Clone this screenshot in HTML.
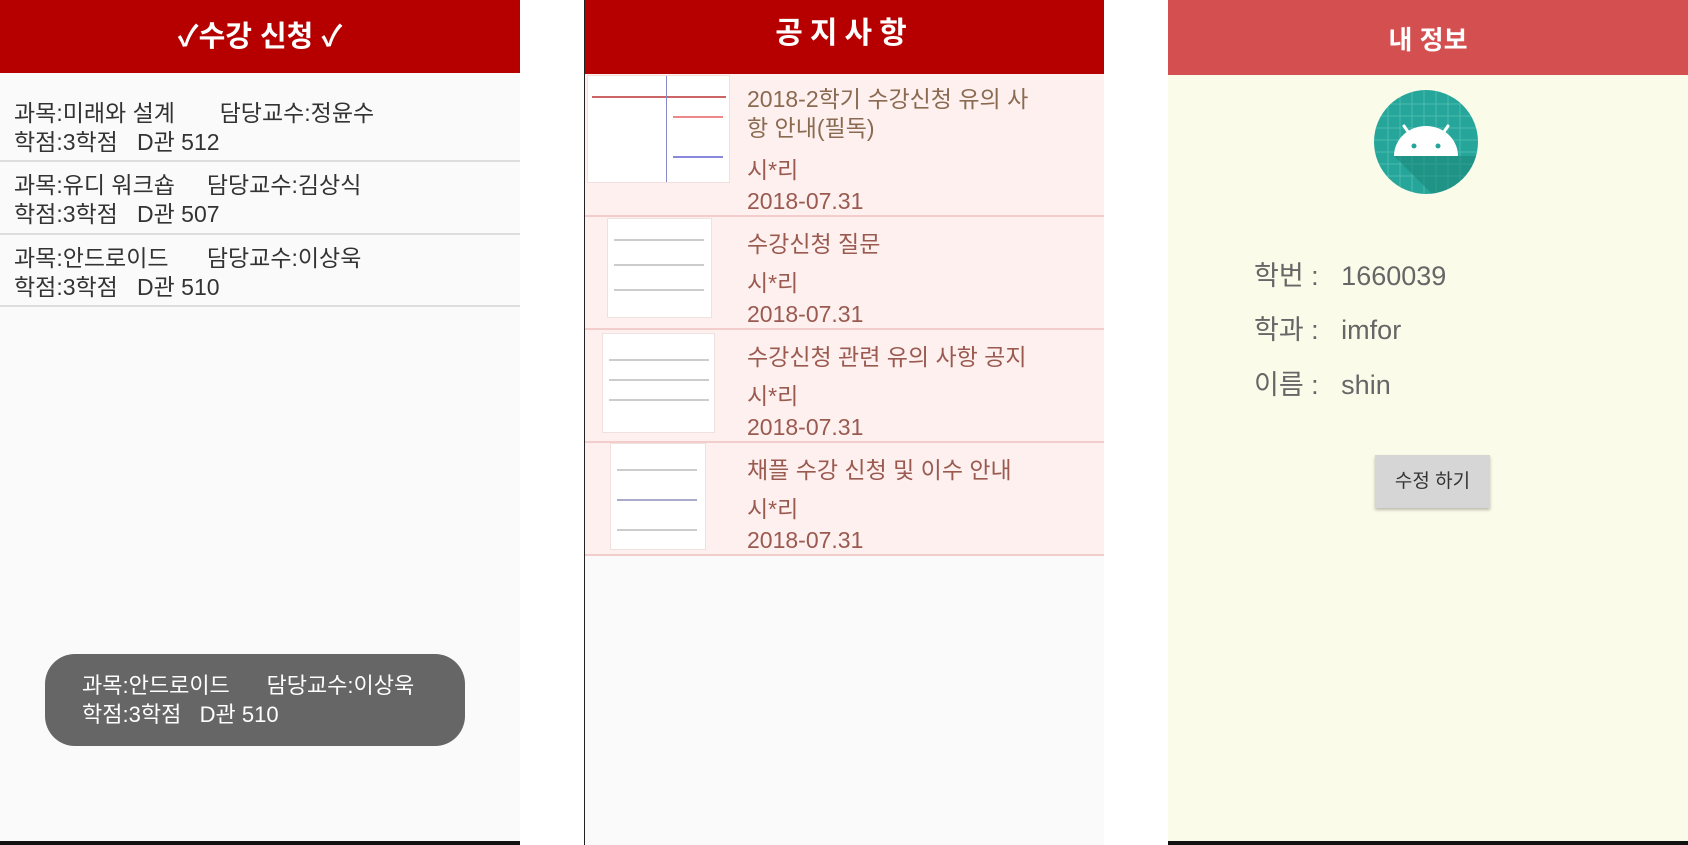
<!DOCTYPE html>
<html><head><meta charset="utf-8"><style>
*{margin:0;padding:0;box-sizing:border-box}
body{width:1688px;height:845px;background:#fff;position:relative;overflow:hidden;font-family:"Liberation Sans","Noto Sans CJK KR",sans-serif}
.p{position:absolute;top:0;height:845px}
.hd{position:absolute;left:0;top:0;width:100%;color:#fff;font-weight:bold;text-align:center}
.t{position:absolute;white-space:pre;font-size:23px;line-height:29px;color:#333}
.sep{position:absolute;left:0;width:100%;height:2px;background:#ddd}
.n{position:absolute;left:162px;font-size:23px;color:#9a5a50;white-space:pre}
.sep2{position:absolute;left:0;width:100%;height:2px;background:#f3cccc}
.th{position:absolute;background:#fff;border:1px solid #f0e0e0}
.th i{position:absolute;height:2px;background:#ccc;display:block}
.lb{position:absolute;font-size:27px;color:#666;white-space:pre}
</style></head><body>
<div class="p" style="left:0;width:520px;background:#fafafa">
 <div class="hd" style="height:73px;background:#b60000;font-size:29px;line-height:75px">✓수강 신청 ✓</div>
 <div class="t" style="left:14px;top:99px">과목:미래와 설계       담당교수:정윤수
학점:3학점   D관 512</div>
 <div class="sep" style="top:160px"></div>
 <div class="t" style="left:14px;top:171px">과목:유디 워크숍     담당교수:김상식
학점:3학점   D관 507</div>
 <div class="sep" style="top:233px"></div>
 <div class="t" style="left:14px;top:244px">과목:안드로이드      담당교수:이상욱
학점:3학점   D관 510</div>
 <div class="sep" style="top:305px"></div>
 <div style="position:absolute;left:45px;top:654px;width:420px;height:92px;border-radius:30px;background:#666"></div>
 <div class="t" style="left:82px;top:671px;color:#fff;font-size:22px;line-height:29px">과목:안드로이드      담당교수:이상욱
학점:3학점   D관 510</div>
 <div style="position:absolute;left:0;top:841px;width:100%;height:4px;background:#111"></div>
</div>
<div class="p" style="left:584px;width:520px;background:#fafafa;border-left:1px solid #222">
 <div class="hd" style="height:74px;background:#b60000;font-size:30px;line-height:68px;letter-spacing:7px">공지사항</div>
 <div style="position:absolute;left:0;top:74px;width:100%;height:481px;background:#fdf0ef"></div>
 <div class="th" style="left:2px;top:75px;width:143px;height:108px"><i style="left:4px;top:20px;width:134px;background:#c66"></i><i style="left:78px;top:0;width:1px;height:106px;background:#88c"></i><i style="left:85px;top:40px;width:50px;background:#e88"></i><i style="left:85px;top:80px;width:50px;background:#88d"></i></div>
 <div class="th" style="left:22px;top:218px;width:105px;height:100px"><i style="left:6px;top:20px;width:90px"></i><i style="left:6px;top:45px;width:90px"></i><i style="left:6px;top:70px;width:90px"></i></div>
 <div class="th" style="left:17px;top:333px;width:113px;height:100px"><i style="left:6px;top:25px;width:100px"></i><i style="left:6px;top:45px;width:100px"></i><i style="left:6px;top:65px;width:100px"></i></div>
 <div class="th" style="left:25px;top:443px;width:96px;height:107px"><i style="left:6px;top:25px;width:80px"></i><i style="left:6px;top:55px;width:80px;background:#aac"></i><i style="left:6px;top:85px;width:80px"></i></div>
 <div class="n" style="top:85px;line-height:29px;color:#8a6a50">2018-2학기 수강신청 유의 사
항 안내(필독)</div>
 <div class="n" style="top:151px">시*리</div><div class="n" style="top:188px">2018-07.31</div>
 <div class="sep2" style="top:215px"></div>
 <div class="n" style="top:225px">수강신청 질문</div><div class="n" style="top:264px">시*리</div><div class="n" style="top:301px">2018-07.31</div>
 <div class="sep2" style="top:328px"></div>
 <div class="n" style="top:338px">수강신청 관련 유의 사항 공지</div><div class="n" style="top:377px">시*리</div><div class="n" style="top:414px">2018-07.31</div>
 <div class="sep2" style="top:441px"></div>
 <div class="n" style="top:451px">채플 수강 신청 및 이수 안내</div><div class="n" style="top:490px">시*리</div><div class="n" style="top:527px">2018-07.31</div>
 <div class="sep2" style="top:554px"></div>
</div>
<div class="p" style="left:1168px;width:520px;background:#fafbe9">
 <div class="hd" style="height:75px;background:#d45050;font-size:26px;line-height:80px">내 정보</div>
 <svg style="position:absolute;left:206px;top:90px" width="104" height="104" viewBox="0 0 104 104">
  <defs><clipPath id="c"><circle cx="52" cy="52" r="52"/></clipPath></defs>
  <circle cx="52" cy="52" r="52" fill="#26a69a"/>
  <g clip-path="url(#c)" stroke="#5cc3b8" stroke-width="1" opacity=".7">
   <path d="M14 0V104M26 0V104M38 0V104M50 0V104M62 0V104M74 0V104M86 0V104M0 14H104M0 26H104M0 38H104M0 50H104M0 62H104M0 74H104M0 86H104"/>
  </g>
  <path clip-path="url(#c)" d="M20 66L60 106L104 106L104 66Z" fill="#1a7f74" opacity=".5"/>
  <path d="M20 66A32 30 0 0 1 84 66Z" fill="#fff"/>
  <path d="M30 36L37 46M74 36L67 46" stroke="#fff" stroke-width="3" stroke-linecap="round"/>
  <circle cx="40" cy="56" r="2.5" fill="#26a69a"/><circle cx="64" cy="56" r="2.5" fill="#26a69a"/>
 </svg>
 <div class="lb" style="left:86px;top:254px">학번 :   1660039</div>
 <div class="lb" style="left:86px;top:308px">학과 :   imfor</div>
 <div class="lb" style="left:86px;top:363px">이름 :   shin</div>
 <div style="position:absolute;left:207px;top:455px;width:115px;height:53px;background:#d6d6d6;box-shadow:0 2px 3px rgba(0,0,0,.25);font-size:19px;color:#333;text-align:center;line-height:53px">수정 하기</div>
 <div style="position:absolute;left:0;top:841px;width:100%;height:4px;background:#111"></div>
</div>
</body></html>
